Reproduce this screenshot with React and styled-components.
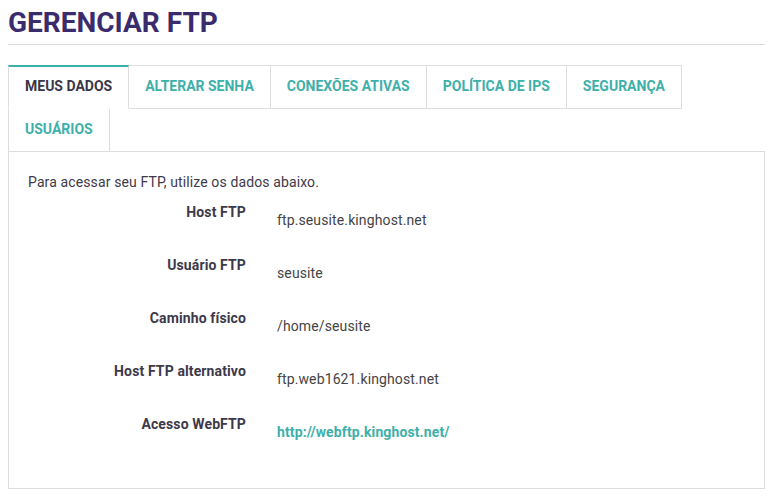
import React from "react";
import styled, { createGlobalStyle } from "styled-components";

const Global = createGlobalStyle`
  html, body { background: #fff; }
  body {
    margin: 8px;
    font-family: Roboto, "Liberation Sans", Arial, sans-serif;
    font-size: 14px;
    line-height: 20px;
    letter-spacing: 0.12px;
    color: #444;
  }
`;

const Page = styled.div`
  width: 757px;
`;

const Title = styled.h1`
  margin: 0;
  font-size: 28px;
  line-height: 29px;
  font-weight: 700;
  letter-spacing: 0;
  color: #3a2b6c;
`;

const Rule = styled.hr`
  margin: 7px 0 20px;
  border: 0;
  border-top: 1px solid #ddd;
  width: 757px;
`;

const Tabs = styled.ul`
  display: flex;
  flex-wrap: wrap;
  list-style: none;
  margin: 0;
  padding: 0;
`;

const Tab = styled.li`
  margin: 0 -1px -1px 0;
  padding: ${(p) => (p.$active ? "9px 16px 12px" : "10px 16px 12px")};
  border: 1px solid #ddd;
  border-top: ${(p) => (p.$active ? "2px solid #3eb0aa" : "1px solid #ddd")};
  border-bottom-color: ${(p) => (p.$active ? "transparent" : "#ddd")};
  background: #fff;
  position: relative;
  z-index: ${(p) => (p.$active ? 2 : 1)};
  font-size: 14px;
  line-height: 20px;
  font-weight: 700;
  letter-spacing: 0;
  text-transform: uppercase;
  color: ${(p) => (p.$active ? "#3b3646" : "#3eb0aa")};
  cursor: pointer;
`;

const Panel = styled.div`
  border: 1px solid #ddd;
  padding: 20px 19px 21px;
`;

const Intro = styled.p`
  margin: 0 0 10px;
  color: #3e3a48;
`;

const Row = styled.div`
  display: grid;
  grid-template-columns: 218px 1fr;
  column-gap: 31px;
  margin-bottom: 25px;
`;

const Label = styled.div`
  text-align: right;
  font-weight: 700;
  color: #3d3949;
`;

const Value = styled.div`
  padding-top: 8px;
  color: #444;
`;

const Link = styled.a`
  font-weight: 700;
  color: #3eb0aa;
  text-decoration: none;
`;

const tabs = [
  "Meus dados",
  "Alterar senha",
  "Conexões ativas",
  "Política de IPs",
  "Segurança",
  "Usuários",
];

const rows = [
  ["Host FTP", "ftp.seusite.kinghost.net"],
  ["Usuário FTP", "seusite"],
  ["Caminho físico", "/home/seusite"],
  ["Host FTP alternativo", "ftp.web1621.kinghost.net"],
];

export default function App() {
  return (
    <Page>
      <Global />
      <Title>GERENCIAR FTP</Title>
      <Rule />
      <Tabs>
        {tabs.map((t, i) => (
          <Tab key={t} $active={i === 0}>
            {t}
          </Tab>
        ))}
      </Tabs>
      <Panel>
        <Intro>Para acessar seu FTP, utilize os dados abaixo.</Intro>
        {rows.map(([l, v]) => (
          <Row key={l}>
            <Label>{l}</Label>
            <Value>{v}</Value>
          </Row>
        ))}
        <Row>
          <Label>Acesso WebFTP</Label>
          <Value>
            <Link href="#">http://webftp.kinghost.net/</Link>
          </Value>
        </Row>
      </Panel>
    </Page>
  );
}
